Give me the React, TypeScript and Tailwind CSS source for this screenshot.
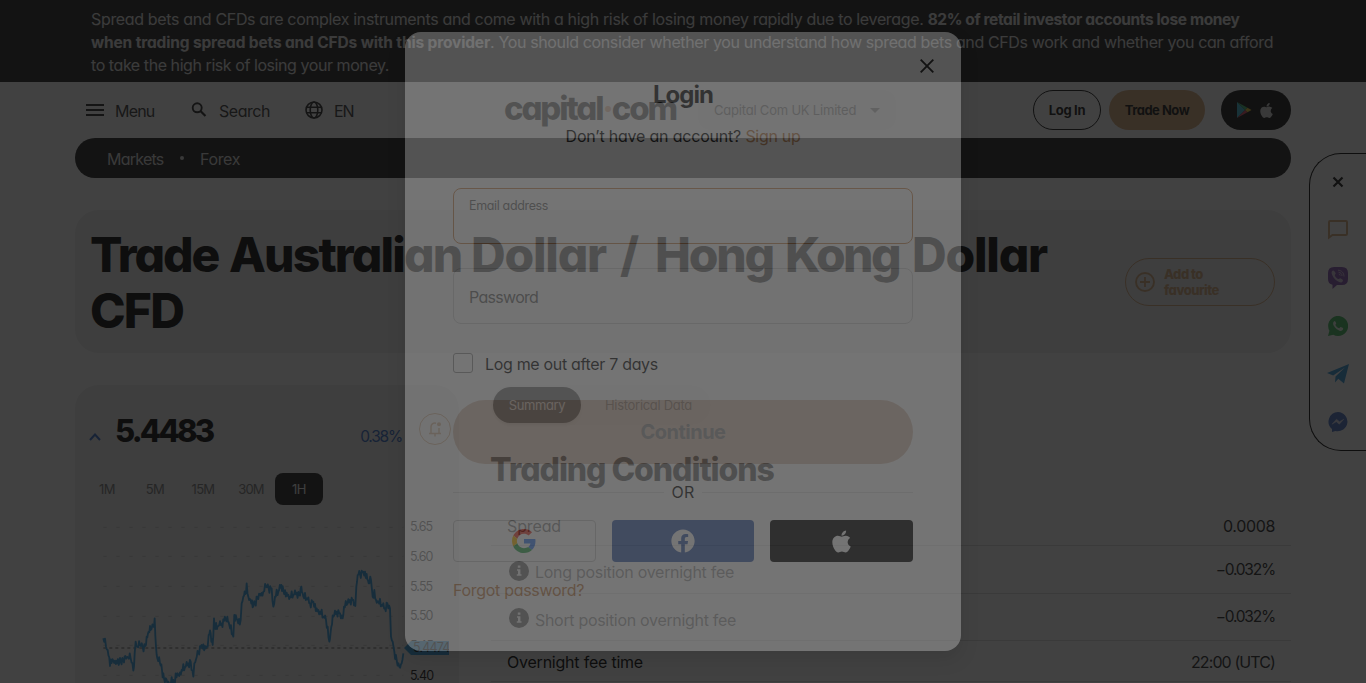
import React from "react";
import { FaApple, FaFacebook } from "react-icons/fa";

const chartPoints = [
  130, 805, 135, 806, 138, 830, 143, 840, 150, 888, 152, 868, 160, 872, 170, 872, 176, 885, 182, 868, 190, 872, 196, 858, 204, 862, 212, 865,
  220, 902, 224, 850, 227, 815, 232, 830, 240, 826, 248, 832, 256, 828, 260, 800, 266, 785, 272, 780, 280, 770, 284, 745, 288, 830, 292, 865,
  300, 880, 306, 900, 312, 925, 320, 930, 330, 940, 340, 930, 344, 950, 347, 910, 355, 915, 365, 900, 375, 892, 385, 880, 392, 875, 400, 920,
  403, 880, 408, 868, 415, 845, 425, 825, 435, 828, 443, 830, 446, 795, 452, 790, 458, 825, 462, 745, 464, 775, 475, 768, 485, 760, 497, 748,
  502, 740, 508, 765, 520, 800, 523, 735, 532, 750, 542, 750, 545, 700, 550, 680, 556, 672, 560, 640, 565, 680, 572, 690, 578, 712, 585, 700,
  592, 680, 600, 672, 610, 665, 618, 650, 626, 655, 635, 655, 640, 710, 645, 680, 655, 665, 664, 645, 670, 660, 680, 668, 690, 680, 700, 675,
  710, 668, 718, 675, 724, 650, 730, 680, 740, 685, 750, 700, 760, 695, 770, 715, 780, 725, 790, 740, 798, 750, 803, 770, 808, 815, 814, 770,
  820, 740, 830, 725, 840, 730, 848, 745, 852, 710, 860, 705, 870, 690, 880, 690, 886, 708, 889, 650, 893, 615, 900, 612, 910, 605, 920, 612,
  926, 640, 933, 630, 938, 680, 943, 660, 948, 690, 955, 695, 965, 705, 975, 715, 982, 700, 990, 715, 993, 800, 998, 815, 1003, 845,
  1010, 870, 1018, 890, 1025, 880, 1030, 850,
];

// Joins the key points with a small oscillation so the line reads as hourly price noise.
function linePath() {
  const out: string[] = [];
  for (let i = 0; i < chartPoints.length - 2; i += 2) {
    const [x0, y0, x1, y1] = chartPoints.slice(i, i + 4);
    const n = Math.max(1, Math.round((x1 - x0) / 2.4));
    for (let k = 0; k < n; k++) {
      const t = k / n;
      const j = k === 0 ? 0 : ((i * 7 + k * 13) % 5) * 3.4 * (k % 2 ? 1 : -1);
      out.push(`${(x0 + (x1 - x0) * t - 69).toFixed(1)} ${(y0 + (y1 - y0) * t + j - 450).toFixed(1)}`);
    }
  }
  out.push("961 400");
  return "M" + out.join("L");
}

const GRID = [22, 109, 199, 289, 376, 466];
const PRICES = ["5.65", "5.60", "5.55", "5.50", "5.45", "5.40"];

function Banner() {
  return (
    <div className="h-[82px] bg-[#1b1b1b] pl-[91px] pt-2 text-base leading-[22px] whitespace-nowrap text-[#e0e0e0]">
      <div className="tracking-[-0.343px]">
        Spread bets and CFDs are complex instruments and come with a high risk of losing money rapidly due to leverage.{" "}
        <b className="text-[15.5px] tracking-[-0.39px]">82% of retail investor accounts lose money</b>
      </div>
      <div>
        <b className="text-[15.5px] tracking-[-0.145px]">when trading spread bets and CFDs with this provider</b>
        <span className="tracking-[-0.369px]">. You should consider whether you understand how spread bets and CFDs work and whether you can afford</span>
      </div>
      <div className="tracking-[-0.433px]">to take the high risk of losing your money.</div>
    </div>
  );
}

function PlayIcon() {
  return (
    <svg width="16" height="16" viewBox="0 0 16 16">
      <path d="M1 0v16l8.200-8z" fill="#35b5cf" />
      <path d="M1 0l8.200 8 2.300-2.300z" fill="#35b46a" />
      <path d="M1 16l8.200-8 2.300 2.300z" fill="#d9405a" />
      <path d="M11.500 5.700L15.500 8l-4 2.300L9.200 8z" fill="#e6c22e" />
    </svg>
  );
}

function Header() {
  return (
    <div className="flex h-14 items-center pl-[86px] pr-[75px] text-base text-[#333] whitespace-nowrap">
      <svg width="18" height="12" viewBox="0 0 18 12"><path d="M0 0h18v2H0zM0 5h18v2H0zM0 10h18v2H0z" fill="#222" /></svg>
      <span className="ml-[11px] w-[76px] tracking-[-0.8px] pt-px">Menu</span>
      <svg width="16" height="16" viewBox="0 0 16 16" fill="none" stroke="#222"><circle cx="6.200" cy="5.800" r="4.500" strokeWidth="1.900" /><path d="M9.500 9l5 5" strokeWidth="2.200" /></svg>
      <span className="ml-[12px] w-[86px] tracking-[-0.45px] pt-px">Search</span>
      <svg width="18" height="18" viewBox="0 0 18 18" fill="none" stroke="#222" strokeWidth="1.600"><circle cx="9" cy="9" r="8" /><ellipse cx="9" cy="9" rx="3.800" ry="8" /><path d="M1.500 6.200h15M1.500 11.800h15" /></svg>
      <span className="ml-[11px] w-[170px] tracking-[-1.2px] pt-px">EN</span>
      <span className="w-[194px] pb-[4px] text-[33px] font-extrabold leading-none tracking-[-2.2px] text-[#151515]">
        capital<span className="text-[#dea77a]">·</span>com
      </span>
      <div className="flex h-10 w-[198px] items-center justify-between rounded-xl bg-[#f4f4f4] pl-4 pr-4 text-[13px] text-[#666]">
        <span className="pt-0.5 tracking-[-0.2px]">Capital Com UK Limited</span>
        <svg width="10" height="5" viewBox="0 0 10 5"><path d="M0 0h10L5 5z" fill="#777" /></svg>
      </div>
      <div className="ml-auto flex h-10 w-[68px] items-center justify-center rounded-full border border-[#111] pt-0.5 text-[13px] font-bold tracking-[-0.35px] text-[#111]">Log In</div>
      <div className="ml-2 flex h-10 w-24 items-center justify-center rounded-full bg-[#d8a97a] pt-0.5 text-[13px] font-bold tracking-[-0.5px] text-[#111]">Trade Now</div>
      <div className="ml-4 flex h-10 w-[70px] items-center justify-center gap-[6px] rounded-full bg-[#111] pr-px text-[#d8d8d8]">
        <PlayIcon />
        <FaApple size={17} />
      </div>
    </div>
  );
}

function Breadcrumbs() {
  return (
    <div className="mx-[75px] flex h-10 items-center rounded-full bg-[#1b1b1b] pl-8 text-base text-[#d8d8d8]">
      <span className="w-[73px] pt-px tracking-[-0.75px]">Markets</span>
      <span className="h-1 w-1 rounded-full bg-[#d8d8d8]" />
      <span className="ml-4 pt-px tracking-[-0.35px]">Forex</span>
    </div>
  );
}

function Hero() {
  return (
    <div className="mx-[75px] mt-8 flex h-[143px] items-center justify-between rounded-[24px] bg-[#eeeeee] px-[15px]">
      <h1 className="pt-[2px] text-[48px] font-extrabold leading-[56px] text-black whitespace-nowrap">
        <span className="flex">
          <span className="w-[139px] tracking-[-2.05px]">Trade</span>
          <span className="w-[242px] tracking-[-1.85px]">Australian</span>
          <span className="w-[149px] tracking-[-1.23px]">Dollar</span>
          <span className="w-[35px]">/</span>
          <span className="w-[130px] tracking-[-2.2px]">Hong</span>
          <span className="w-[127px] tracking-[-2.6px]">Kong</span>
          <span className="tracking-[-1.23px]">Dollar</span>
        </span>
        <span className="tracking-[-1.83px]">CFD</span>
      </h1>
      <div className="mr-px flex h-12 w-[150px] items-center gap-[9px] rounded-full border border-[#d8a97a] pl-[9px] text-[#d8a97a]">
        <svg width="20" height="20" viewBox="0 0 20 20" fill="none" stroke="currentColor" strokeWidth="1.900"><circle cx="10" cy="10" r="9" /><path d="M10 5v10M5 10h10" /></svg>
        <span className="text-[13px] font-extrabold leading-4 tracking-[-0.5px]">Add to<br />favourite</span>
      </div>
    </div>
  );
}

function PriceCard() {
  return (
    <div className="h-[330px] w-[384px] shrink-0 rounded-[24px] bg-[#eeeeee]">
      <div className="flex h-[88px] items-center pl-[14px] pr-2">
        <svg className="mt-4" width="12" height="8" viewBox="0 0 12 8"><path d="M1 7l5-5.500L11 7" fill="none" stroke="#3068c8" strokeWidth="2" /></svg>
        <span className="ml-[14px] pt-0.5 text-[31px] font-extrabold leading-none tracking-[-2.8px] text-black">5.4483</span>
        <span className="ml-auto mt-[16px] text-[15.5px] tracking-[-1.2px] text-[#3068c8]">0.38%</span>
        <span className="ml-[17px] flex h-8 w-8 items-center justify-center rounded-full border border-[#b88450]">
          <svg width="14" height="16" viewBox="0 0 14 16" fill="none" stroke="#b88450" strokeWidth="1.500"><path d="M8 2.200C5 1.500 3 3.500 3 6v6M11 7v5M1 12.500h12M7 13v2.500" /><circle cx="11" cy="3.200" r="1.300" fill="#b88450" /></svg>
        </span>
      </div>
      <div className="flex h-8 pl-2 text-[13px] text-[#777] [&>span]:flex [&>span]:w-12 [&>span]:items-center [&>span]:justify-center [&>span]:pt-0.5">
        <span className="tracking-[-0.5px]">1M</span>
        <span className="tracking-[-0.5px]">5M</span>
        <span className="tracking-[-0.7px]">15M</span>
        <span className="tracking-[-0.8px]">30M</span>
        <span className="rounded-lg bg-[#1b1b1b] tracking-[-0.5px] text-[#eee]">1H</span>
      </div>
      <div className="flex pl-2 pt-[15px]">
        <svg width="326" height="163" viewBox="0 0 978 489" className="overflow-hidden">
          {GRID.map((y) => (
            <path key={y} d={`M61 ${y}H961`} stroke="#c9c9c9" strokeWidth="3" strokeDasharray="10 29" />
          ))}
          <path d="M61 384H961" stroke="#8f8f8f" strokeWidth="4.500" strokeDasharray="9 9" />
          <path d={linePath()} fill="none" stroke="#2f9be0" strokeWidth="5.500" strokeLinejoin="round" />
        </svg>
        <div className="relative w-[44px] text-[12.5px] leading-[29.800px] tracking-[-0.9px] text-[#111]">
          <div className="-mt-[8px] ml-px">
            {PRICES.map((p) => (
              <div key={p}>{p}</div>
            ))}
          </div>
          <div className="absolute -left-[5px] top-[121px] flex h-[14px] w-[45px] items-center bg-[#2f9be0] pl-[9px] leading-none tracking-[-0.8px] [clip-path:polygon(0_50%,7px_0,100%_0,100%_100%,7px_100%)]">5.4474</div>
        </div>
      </div>
    </div>
  );
}

function InfoIcon() {
  return (
    <svg className="mr-[6px] ml-[2px] mt-0.5" width="20" height="20" viewBox="0 0 20 20">
      <circle cx="10" cy="10" r="10" fill="#111" />
      <path d="M8.800 4.500h2.600v2.200H8.800zM8 8.300h3.400v5H12.500v1.500H7.800v-1.500h1.200v-3.500H8z" fill="#eee" />
    </svg>
  );
}

function Conditions() {
  return (
    <div className="w-[800px] text-base text-[#222] [&>div.row]:flex [&>div.row]:items-center [&>div.row]:border-b [&>div.row]:border-[#dcdcdc] [&>div.row]:px-4">
      <div className="flex h-10 w-[220px] items-center rounded-full bg-[#f6f6f6] pl-[2px] text-[13px]">
        <span className="flex h-9 w-[88px] items-center justify-center rounded-full bg-[#1b1b1b] pt-0.5 tracking-[-0.4px] text-[#eee] shadow-md">Summary</span>
        <span className="ml-6 pt-0.5 tracking-[-0.3px] text-[#777]">Historical Data</span>
      </div>
      <h2 className="-ml-px mt-[25px] h-[56px] text-[32px] font-extrabold leading-10 tracking-[-1.08px] text-black">Trading Conditions</h2>
      <div className="row h-10"><span className="tracking-[-0.12px] text-[#333]">Spread</span><span className="ml-auto tracking-[-0.35px]">0.0008</span></div>
      <div className="row h-12"><InfoIcon /><span className="pt-[5px] tracking-[-0.29px] text-[#555]">Long position overnight fee</span><span className="ml-auto text-[15.5px] tracking-[-1.2px]">−0.032%</span></div>
      <div className="row h-[47px]"><InfoIcon /><span className="pt-[6px] tracking-[-0.31px] text-[#555]">Short position overnight fee</span><span className="ml-auto text-[15.5px] tracking-[-1.2px]">−0.032%</span></div>
      <div className="row h-[41px] pt-px"><span className="tracking-[-0.22px] text-black">Overnight fee time</span><span className="ml-auto tracking-[-0.9px]">22:00 (UTC)</span></div>
    </div>
  );
}

function ContactRail() {
  return (
    <div className="absolute right-0 top-[153px] flex h-[298px] w-[57px] flex-col items-center rounded-l-[32px] border border-r-0 border-black pt-[16px] [&>span]:flex [&>span]:h-12 [&>span]:items-center">
      <span className="-mt-3"><svg width="12" height="12" viewBox="0 0 12 12"><path d="M1.500 1.500l9 9M10.500 1.500l-9 9" stroke="#111" strokeWidth="2.200" /></svg></span>
      <span><svg width="20" height="20" viewBox="0 0 20 20" fill="none" stroke="#d8a97a" strokeWidth="2"><path d="M1 17.500V2a1 1 0 0 1 1-1h16a1 1 0 0 1 1 1v12a1 1 0 0 1-1 1H4.500z" /></svg></span>
      <span><svg width="20" height="22" viewBox="0 0 20 22"><path d="M6 0h8q6 0 6 6v6q0 6-6 6H9l-4.500 4v-4.300Q0 17 0 12V6q0-6 6-6z" fill="#8450b0" /><path d="M5 3.500c-1.800.9-1.700 2.500-.8 4.500 1.500 3.500 4 6 7.500 7.300 1.500.5 2.700-.2 3.300-1.600.3-.8-1.800-2.200-2.700-2.500-.8-.2-1.100 1-1.900.9-1.700-.6-3.200-2.200-3.600-3.900-.1-.8 1.100-1 .9-1.900C7.300 5.200 6 3.300 5 3.500z" fill="#d2c6dc" /><path d="M10 3.200c3.500.2 6 2.500 6 6.300M10.500 5.200c2 .2 3.500 1.500 3.500 3.800M10.800 7c.8.1 1.300.6 1.400 1.500" stroke="#d2c6dc" strokeWidth=".9" fill="none" /></svg></span>
      <span><svg width="20" height="20" viewBox="0 0 20 20"><path d="M0 20l1.400-5.200A10 10 0 1 1 5.300 18.700z" fill="#3fb85a" /><path d="M6.500 5c-1.800 1-1.700 3-.7 4.800 1.500 2.700 3.700 4.300 6.200 5.100 1.600.4 3.100-.8 3.200-2.300 0-.5-1.900-1.400-2.500-1.500-.7 0-.9 1.300-1.600 1.200-1.700-.6-3-1.800-3.700-3.300-.1-.6.9-1 .8-1.700C8 6.600 7.400 5 6.500 5z" fill="#e8f6ea" /></svg></span>
      <span><svg width="22" height="20" viewBox="0 0 22 20"><path d="M22 0L0 9l6.200 2.500L18 3.500 8.500 12.500 8 18.500l3.300-3.700 5.700 4.700z" fill="#2f95d6" /></svg></span>
      <span><svg width="20" height="20" viewBox="0 0 20 20"><path d="M10 0a10 9.600 0 1 1-2.500 19L4 20v-2.900A9.700 9.700 0 0 1 10 0z" fill="#466fc0" /><path d="M4 12.200l4.500-5 3 2.500 4.300-2.500-4.500 5-3-2.500z" fill="#dde" stroke="#dde" strokeWidth=".5" /></svg></span>
    </div>
  );
}

function GoogleIcon() {
  return (
    <svg width="24" height="24" viewBox="0 0 48 48">
      <path fill="#EA4335" d="M24 9.500c3.540 0 6.710 1.220 9.210 3.600l6.850-6.850C35.900 2.380 30.470 0 24 0 14.620 0 6.510 5.380 2.560 13.220l7.980 6.190C12.430 13.720 17.740 9.500 24 9.500z" />
      <path fill="#4285F4" d="M46.980 24.550c0-1.570-.15-3.090-.38-4.550H24v9.020h12.940c-.58 2.960-2.260 5.480-4.780 7.180l7.730 6c4.510-4.180 7.090-10.360 7.090-17.650z" />
      <path fill="#FBBC05" d="M10.530 28.590c-.48-1.450-.76-2.990-.76-4.590s.27-3.140.76-4.590l-7.980-6.190C.92 16.460 0 20.120 0 24c0 3.880.92 7.540 2.560 10.780l7.970-6.190z" />
      <path fill="#34A853" d="M24 48c6.480 0 11.930-2.130 15.890-5.810l-7.730-6c-2.150 1.450-4.920 2.300-8.160 2.300-6.260 0-11.570-4.220-13.470-9.910l-7.980 6.190C6.510 42.620 14.620 48 24 48z" />
    </svg>
  );
}

function LoginModal() {
  return (
    <div className="relative h-[619px] w-[556px] rounded-2xl bg-white px-12 text-base text-[#111] opacity-[0.27] shadow-[0_8px_16px_rgba(0,0,0,0.3)]">
      <svg className="absolute right-[27px] top-[27px]" width="14" height="14" viewBox="0 0 14 14"><path d="M.7.7l12.600 12.600M13.300.7L.7 13.300" stroke="#111" strokeWidth="1.900" /></svg>
      <h2 className="pt-[47px] text-center text-2xl font-bold leading-8 tracking-[-0.95px]">Login</h2>
      <p className="mt-[13px] text-center leading-6 tracking-[-0.2px]">
        Don’t have an account? <span className="tracking-[-0.3px] text-[#c48550]">Sign up</span>
      </p>
      <div className="mt-[40px] h-14 rounded-lg border border-[#d0935f] px-[15px] pt-2 text-[12.5px] leading-[18px] tracking-[-0.35px] text-[#777]">Email address</div>
      <div className="mt-6 flex h-14 items-center rounded-lg border border-[#d8d8d8] px-[15px] pt-px tracking-[-0.7px] text-[#777]">Password</div>
      <div className="mt-[29px] flex h-5 items-center gap-3 tracking-[-0.32px]"><span className="h-5 w-5 rounded-[3px] border border-[#999]" /><span className="pt-px">Log me out after 7 days</span></div>
      <div className="mt-[27px] flex h-16 items-center justify-center rounded-full bg-[#dec8b9] text-xl font-bold tracking-[-0.5px] text-[#999]">Continue</div>
      <div className="mt-4 flex h-6 items-center gap-2 tracking-[0.2px]"><span className="h-px flex-1 bg-[#e2e2e2]" /><span className="-mt-px">OR</span><span className="h-px flex-1 bg-[#e2e2e2]" /></div>
      <div className="mt-4 grid h-[42px] grid-cols-3 gap-4 [&>span]:flex [&>span]:items-center [&>span]:justify-center [&>span]:rounded">
        <span className="border border-[#ccc]"><GoogleIcon /></span>
        <span className="bg-[#4267b2] text-white"><FaFacebook size={24} /></span>
        <span className="bg-black text-white"><FaApple size={25} /></span>
      </div>
      <p className="mt-4 leading-6 tracking-[-0.3px] text-[#c48550]">Forgot password?</p>
    </div>
  );
}

export default function App() {
  return (
    <div className="relative h-[683px] w-[1366px] overflow-hidden bg-white font-['Inter','Liberation_Sans',sans-serif] [font-feature-settings:'cv11']">
      <Banner />
      <Header />
      <Breadcrumbs />
      <Hero />
      <div className="mx-[75px] mt-8 flex gap-8">
        <PriceCard />
        <Conditions />
      </div>
      <ContactRail />
      <div className="absolute inset-0 bg-[#111]/80" />
      <div className="absolute inset-0 flex justify-center pt-8">
        <LoginModal />
      </div>
    </div>
  );
}
